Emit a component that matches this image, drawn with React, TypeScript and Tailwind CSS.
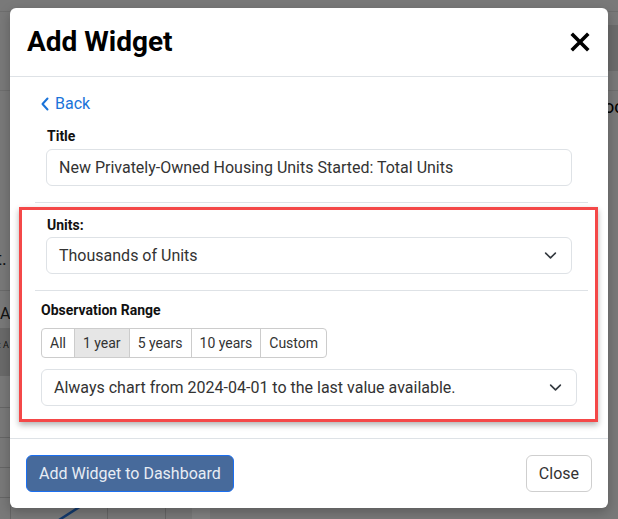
import React from "react";

function Chevron({ className = "" }: { className?: string }) {
  return (
    <svg viewBox="0 0 16 16" className={className} fill="none" stroke="#343a40" strokeWidth="2" strokeLinecap="round" strokeLinejoin="round">
      <path d="M2 5l6 6 6-6" />
    </svg>
  );
}

export default function App() {
  const font = { fontFamily: "Roboto, 'Liberation Sans', sans-serif" };
  return (
    <div className="relative w-[618px] h-[519px] overflow-hidden bg-[#797979]" style={font}>
      {/* dimmed page behind */}
      <div className="absolute inset-0">
        <div className="absolute left-0 right-0 top-[11px] h-px bg-[#6e6e6e]" />
        <div className="absolute left-[600px] right-0 top-[25px] h-[46px] bg-[#6c6c6c]" />
        <div className="absolute left-0 right-0 top-[90px] h-px bg-[#6e6e6e]" />
        <div className="absolute left-[604px] top-[98px] text-[18px] text-black leading-none">oc</div>
        <div className="absolute left-[-4px] top-[250px] text-[18px] text-[#111] leading-none">t.</div>
        <div className="absolute left-0 w-[20px] top-[290px] h-px bg-[#6a6a6a]" />
        <div className="absolute left-0 top-[306px] text-[16px] text-[#111] leading-none">A</div>
        <div className="absolute left-0 w-[20px] top-[328px] h-[48px] bg-[#6a6a6a]" />
        <div className="absolute left-[-6px] top-[341px] text-[9px] text-[#111] leading-none">s: A</div>
        <div className="absolute left-[10px] top-[378px] bottom-0 w-px bg-[#666]" />
        <div className="absolute left-0 w-[20px] top-[407px] h-px bg-[#666]" />
        <div className="absolute left-0 w-[20px] top-[437px] h-px bg-[#666]" />
        <div className="absolute left-0 w-[20px] top-[467px] h-px bg-[#666]" />
        <div className="absolute left-0 w-[20px] top-[497px] h-px bg-[#666]" />
        <div className="absolute left-[107px] top-[508px] bottom-0 w-px bg-[#666]" />
        <div className="absolute left-[165px] top-[508px] bottom-0 w-px bg-[#666]" />
        <div className="absolute left-[192px] top-[508px] bottom-0 w-[18px] bg-[#828282]" />
        <svg className="absolute left-[55px] top-[506px]" width="30" height="14">
          <path d="M4 14 L26 0" stroke="#123a6e" strokeWidth="2.5" fill="none" />
        </svg>
      </div>

      {/* modal */}
      <div className="relative ml-[10px] mt-[8px] w-[598px] h-[500px] bg-white rounded-[6px] shadow-[0_4px_12px_rgba(0,0,0,0.25)] flex flex-col">
        <div className="h-[69px] shrink-0 flex items-center justify-between pl-[17px] pr-[18px] border-b border-[#dee2e6]">
          <h1 className="text-[28px] font-bold text-black leading-none">Add Widget</h1>
          <svg width="20" height="20" viewBox="0 0 20 20">
            <path d="M3 3L17 17M17 3L3 17" stroke="#000" strokeWidth="3.6" strokeLinecap="square" />
          </svg>
        </div>

        <div className="flex flex-col pt-[15px]">
          <div className="ml-[31px] h-[24px] flex items-center gap-[6px] text-[#1a73d9] text-[16px]">
            <svg width="8" height="14" viewBox="0 0 8 14">
              <path d="M6.5 1.5L1.5 7l5 5.5" stroke="#1a73d9" strokeWidth="2" fill="none" strokeLinecap="round" strokeLinejoin="round" />
            </svg>
            <span>Back</span>
          </div>

          <div className="ml-[36px] w-[526px] mt-[12px]">
            <div className="text-[14px] font-bold text-[#111] leading-[17px] pl-[1px]">Title</div>
            <div className="mt-[4px] h-[37px] border border-[#dee2e6] rounded-[6px] flex items-center px-[12px] text-[16px] text-[#333]">
              New Privately-Owned Housing Units Started: Total Units
            </div>
          </div>

          <div className="ml-[25px] w-[553px] h-px bg-[#dee2e6] mt-[16px]" />

          <div className="ml-[9px] w-[579px] h-[215px] mt-[4px] border-[3px] border-[#f44848] shadow-[0_3px_6px_rgba(0,0,0,0.3)] flex flex-col">
            <div className="ml-[24px] w-[526px] mt-[7px]">
              <div className="text-[14px] font-bold text-[#111] leading-[17px] pl-[1px]">Units:</div>
              <div className="mt-[3px] h-[37px] border border-[#dee2e6] rounded-[6px] flex items-center justify-between pl-[12px] pr-[14px] text-[16px] text-[#333]">
                <span>Thousands of Units</span>
                <Chevron className="w-[13px] h-[13px]" />
              </div>
            </div>

            <div className="ml-[13px] w-[553px] h-px bg-[#dee2e6] mt-[16px]" />

            <div className="ml-[19px] w-[536px] mt-[11px]">
              <div className="text-[14px] font-bold text-[#111] leading-[17px]">Observation Range</div>
              <div className="mt-[9px] inline-flex h-[30px] border border-[#cccccc] rounded-[4px] overflow-hidden text-[14px] text-[#333]">
                <div className="px-[8px] flex items-center">All</div>
                <div className="px-[8px] flex items-center bg-[#e6e6e6] border-l border-[#cccccc]">1 year</div>
                <div className="px-[8px] flex items-center border-l border-[#cccccc]">5 years</div>
                <div className="px-[8px] flex items-center border-l border-[#cccccc]">10 years</div>
                <div className="px-[8px] flex items-center border-l border-[#cccccc]">Custom</div>
              </div>
              <div className="mt-[11px] h-[37px] border border-[#dee2e6] rounded-[6px] flex items-center justify-between pl-[12px] pr-[14px] text-[16px] text-[#333]">
                <span>Always chart from 2024-04-01 to the last value available.</span>
                <Chevron className="w-[13px] h-[13px]" />
              </div>
            </div>
          </div>
        </div>

        <div className="mt-[16px] border-t border-[#dee2e6] flex-1 flex items-start justify-between px-[16px] pt-[16px]">
          <button className="h-[37px] px-[12px] rounded-[6px] bg-[#476a9b] border border-[#1b6ff0] text-[16px] text-[#e8edf4]">
            Add Widget to Dashboard
          </button>
          <button className="h-[37px] px-[12px] rounded-[6px] bg-white border border-[#cfcfcf] text-[16px] text-[#333]">
            Close
          </button>
        </div>
      </div>
    </div>
  );
}
